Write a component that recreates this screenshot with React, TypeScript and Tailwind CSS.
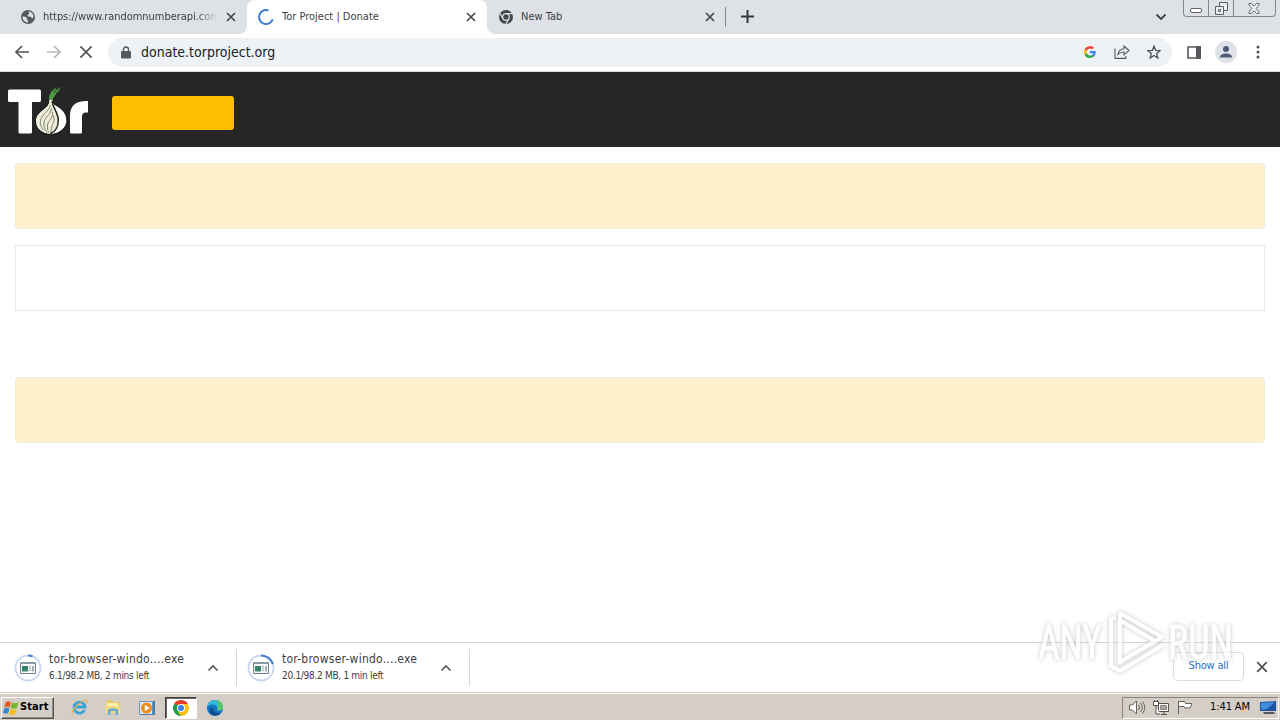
import { FC, ReactNode } from "react";
import clsx from "clsx";

const CloseIcon: FC<{ size?: number; color?: string; weight?: number }> = ({
  size = 10,
  color = "#45484c",
  weight = 1.7,
}) => (
  <svg width={size} height={size} viewBox="0 0 10 10" className="shrink-0">
    <path d="M1 1l8 8M9 1L1 9" stroke={color} strokeWidth={weight} fill="none" />
  </svg>
);

const GlobeIcon = () => (
  <svg width="14" height="14" viewBox="0 0 14 14" className="shrink-0">
    <circle cx="7" cy="7" r="7" fill="#55585d" />
    <path
      d="M1.4 6.6l3 .2 1.5 1.3-.3 1.4 1.3.6.1 2.3C4 12.600 1.300 10 1.400 6.600zM7.500 1.600C10.500 1.600 12.500 4 12.500 7l-1.300 1.600-1.400-1.800-2.800-.3-.6-1.400 1.700-1 .1-1.300-.7-.4z"
      fill="#dee1e6"
    />
  </svg>
);

const SpinnerIcon = () => (
  <svg width="16" height="16" viewBox="0 0 16 16" className="shrink-0">
    <path d="M10.500 1.450A7 7 0 1 0 14.700 10.300" stroke="#3f7fd0" strokeWidth="2" fill="none" />
  </svg>
);

const ChromeMonoIcon = () => (
  <svg width="14" height="14" viewBox="0 0 14 14" className="shrink-0">
    <circle cx="7" cy="7" r="7" fill="#43474c" />
    <circle cx="7" cy="7" r="3.300" fill="none" stroke="#dee1e6" strokeWidth="1.200" />
    <path d="M7 3.700h6.300M4.100 8.700L1 3.500M9.900 8.700L6.800 14" stroke="#dee1e6" strokeWidth="1.200" />
  </svg>
);

const ChromeIcon = () => (
  <svg width="16" height="16" viewBox="0 0 16 16">
    <path d="M8 8L1.070 4A8 8 0 0 1 14.930 4z" fill="#e33b2e" />
    <path d="M8 8L14.930 4A8 8 0 0 1 8 16z" fill="#fbc116" />
    <path d="M8 8L8 16A8 8 0 0 1 1.070 4z" fill="#229a4b" />
    <path d="M8 4h6.930l-3 5.500z" fill="#fbc116" />
    <path d="M11.460 10L8 16l-3-4z" fill="#fbc116" />
    <path d="M4.540 10L1.070 4l4 1z" fill="#229a4b" />
    <circle cx="8" cy="8" r="4" fill="#fff" />
    <circle cx="8" cy="8" r="3" fill="#3e7de9" />
  </svg>
);

const TorLogo = () => (
  <svg width="81" height="50" viewBox="0 0 81 50" className="shrink-0">
    <path
      d="M1.500 3.500H31.500a1.500 1.500 0 0 1 1.500 1.500V14.500a1.500 1.500 0 0 1-1.500 1.500H24V46a1.500 1.500 0 0 1-1.500 1.500H12a1.500 1.500 0 0 1-1.500-1.500V16H1.500A1.500 1.500 0 0 1 0 14.500V5A1.500 1.500 0 0 1 1.500 3.500z"
      fill="#fff"
    />
    <path
      d="M62 46V30C62 19.500 68 14.500 80 15V26.500c-5-.3-6 1-6 5V46a1.500 1.500 0 0 1-1.500 1.500h-9A1.500 1.500 0 0 1 62 46z"
      fill="#fff"
    />
    <path
      d="M41 13c0 6-2.500 7.500-6.500 10.500C29 28 27 31 27.500 36c.5 7.500 7 12.500 15.500 12.500S59 42 59 34.500C59 27 54 22 47 18.500c-1.500-1-2-3-2-5.500z"
      fill="#fff"
      stroke="#1a1a1a"
      strokeWidth="1.200"
    />
    <path
      d="M41.500 13.500c0 6-2.500 8-6.500 11-5 4-6.700 7-6.200 11.500.6 6.500 6 11 13 11.500 4-1 8-5 8.200-12.500.2-6-3.500-10-5-13.500-.8-2-.9-5-.8-8z"
      fill="#eeeed8"
    />
    <path
      d="M44.300 15c-.2 6 5.700 11 6 19 .2 7-3.500 12-8 13.800"
      stroke="#1f2219"
      strokeWidth="1.500"
      fill="none"
    />
    <path
      d="M42.500 19c-1 5-5 7-8 11-4 6-2 11 1.500 14.500M43.500 22c0 6-6 8-7.500 14-.6 4 .5 7.500 3 10.500M44.300 26c1.500 6-4 8-4.800 13-.3 3 0 5 1.200 7.500M45 29c3 6-1 9-1.300 12-.2 2-.5 4-1.500 5.500"
      stroke="#767b64"
      strokeWidth=".9"
      fill="none"
    />
    <path
      d="M41 13c-.5-5 3-9 8-12-3 4-3 5-3 6 2-3 4-5 7.500-6-4 3-5 7-7.500 10-1 1-1.500 2-1.500 3z"
      fill="#3d8e3d"
    />
    <path d="M42 13c1-4 3-7 6-10M44 13c2-5 4-7 8-9" stroke="#79bb57" strokeWidth=".7" fill="none" />
  </svg>
);

const Tab: FC<{ icon: ReactNode; title: string; active?: boolean; width: string; text?: string }> = ({
  icon,
  title,
  active,
  width,
  text,
}) => (
  <div
    className={clsx(
      "relative flex h-[34px] items-center pr-[11px] text-[11px] text-[#3c4043]",
      active ? "rounded-t-lg bg-white pl-[11px]" : "pl-3",
      width,
    )}
  >
    {active && (
      <>
        <svg className="absolute bottom-0 -left-2" width="8" height="8">
          <path d="M8 0v8H0a8 8 0 0 0 8-8z" fill="#fff" />
        </svg>
        <svg className="absolute -right-2 bottom-0" width="8" height="8">
          <path d="M0 0v8h8a8 8 0 0 1-8-8z" fill="#fff" />
        </svg>
      </>
    )}
    {icon}
    <span className={clsx("ml-2 overflow-hidden pt-px whitespace-nowrap", text)}>{title}</span>
    <span className="ml-auto flex">
      <CloseIcon />
    </span>
  </div>
);

const TabStrip = () => (
  <div className="flex h-[34px] bg-[#dee1e6]">
    <Tab
      width="w-[238px] ml-[9px]"
      icon={<GlobeIcon />}
      title="https://www.randomnumberapi.com"
      text="w-[175px] tracking-[-0.05px] [mask-image:linear-gradient(to_right,black_88%,transparent)]"
    />
    <Tab width="w-[240px]" icon={<SpinnerIcon />} title="Tor Project | Donate" active />
    <Tab width="w-[239px]" icon={<ChromeMonoIcon />} title="New Tab" />
    <div className="mt-[7px] -ml-px h-5 w-px bg-[#85888d]" />
    <svg width="13" height="13" viewBox="0 0 13 13" className="mt-[10px] ml-[15px]">
      <path d="M6.500 0v13M0 6.500h13" stroke="#33363a" strokeWidth="2" />
    </svg>
    <svg width="12" height="8" viewBox="0 0 12 8" className="mt-[13px] ml-auto">
      <path d="M1.500 1.500L6 6l4.500-4.500" stroke="#3c4043" strokeWidth="1.800" fill="none" />
    </svg>
    <div className="mr-1 ml-4 flex h-[17px] w-[93px] rounded-b border border-t-0 border-[#84878d]">
      <div className="flex w-[25px] justify-center border-r border-[#84878d] pt-2">
        <div className="h-[5px] w-3 rounded-xs border border-[#606368] bg-white" />
      </div>
      <div className="flex w-[25px] justify-center border-r border-[#84878d] pt-[2px]">
        <svg width="13" height="13" viewBox="0 0 13 13" fill="#eceef1" stroke="#5b5e63">
          <path d="M4.500.5h8v8h-8z" />
          <path d="M.5 4.500h8v8h-8zM3.500 7.500h2v2h-2z" />
        </svg>
      </div>
      <svg width="12" height="11" viewBox="0 0 12 11" className="mt-[3px] ml-[14px]">
        <path
          d="M1 .5h2.500L6 3.300 8.500.5H11v1.500L8 5.500l3 3.500v1.500H8.500L6 7.700 3.500 10.500H1V9l3-3.500L1 2z"
          fill="#f5f6f7"
          stroke="#63666b"
        />
      </svg>
    </div>
  </div>
);

const Toolbar = () => (
  <div className="flex h-[38px] items-center border-b border-[#d9dbde] bg-white pb-px">
    <svg width="16" height="14" viewBox="0 0 16 14" className="ml-[14px]">
      <path d="M15 7H2M8 1L2 7l6 6" stroke="#505358" strokeWidth="1.700" fill="none" />
    </svg>
    <svg width="16" height="14" viewBox="0 0 16 14" className="ml-4">
      <path d="M1 7h13M8 1l6 6-6 6" stroke="#b5b7ba" strokeWidth="1.700" fill="none" />
    </svg>
    <div className="ml-[17px]">
      <CloseIcon size={14} color="#505358" weight={1.2} />
    </div>
    <div className="ml-[15px] flex h-[29px] w-[1064px] items-center rounded-full bg-[#eff2f5] pr-[11px] pl-[13px]">
      <svg width="10" height="13" viewBox="0 0 10 13">
        <path d="M2.500 6V3.500a2.500 2.500 0 0 1 5 0V6" stroke="#55585d" strokeWidth="1.400" fill="none" />
        <rect y="5" width="10" height="7.500" rx="1" fill="#55585d" />
      </svg>
      <span className="ml-[10px] pt-px text-[14px] text-[#202124]">donate.torproject.org</span>
      <svg width="12" height="12" viewBox="0 0 24 24" className="ml-auto">
        <path d="M23.500 12.300c0-.8-.1-1.600-.2-2.300H12v4.500h6.500a5.500 5.500 0 0 1-2.400 3.600v3h3.900c2.200-2.100 3.500-5.100 3.500-8.800z" fill="#4285f4" />
        <path d="M12 24c3.200 0 6-1.100 8-2.900l-3.900-3c-1.100.7-2.500 1.100-4.100 1.100-3.100 0-5.800-2.100-6.700-5H1.300v3.100A12 12 0 0 0 12 24z" fill="#34a853" />
        <path d="M5.300 14.200a7 7 0 0 1 0-4.500V6.600h-4a12 12 0 0 0 0 10.800z" fill="#fbbc05" />
        <path d="M12 4.800c1.800 0 3.300.6 4.600 1.800L20 3.200A12 12 0 0 0 1.300 6.600l4 3.100c.9-2.900 3.600-4.900 6.700-4.900z" fill="#ea4335" />
      </svg>
      <svg width="16" height="14" viewBox="0 0 16 14" className="ml-[18px]" fill="none" stroke="#55585d" strokeWidth="1.100">
        <path d="M1 3.500v9.900h11V11" />
        <path d="M4 9.500c.5-4 2.500-5.700 6-5.800V1l5 4.500-5 4.300V7c-3 0-4.500.7-6 2.500z" />
      </svg>
      <svg width="14" height="14" viewBox="0 0 24 24" className="ml-[17px]" fill="none" stroke="#505358" strokeWidth="2.300">
        <path d="M12 2l2.900 7.200 7.700.5-6 5 2 7.600-6.600-4.200-6.600 4.200 2-7.600-6-5 7.700-.5z" />
      </svg>
    </div>
    <svg width="14" height="13" viewBox="0 0 14 13" className="ml-[15px]">
      <path d="M1 1h12v11H1z" fill="#fff" stroke="#55585d" strokeWidth="1.600" />
      <path d="M9 0h5v13H9z" fill="#55585d" />
    </svg>
    <svg width="22" height="22" viewBox="0 0 22 22" className="ml-[14px]">
      <circle cx="11" cy="11" r="11" fill="#dee1e6" />
      <circle cx="11" cy="8" r="3" fill="#4c5a78" />
      <path d="M5 16.500c0-3 3-4 6-4s6 1 6 4z" fill="#4c5a78" />
    </svg>
    <svg width="4" height="14" viewBox="0 0 4 14" className="ml-[19px]" fill="#505358">
      <circle cx="2" cy="2" r="1.500" />
      <circle cx="2" cy="7" r="1.500" />
      <circle cx="2" cy="12" r="1.500" />
    </svg>
  </div>
);

const DonatePage = () => (
  <div className="h-[570px] bg-white">
    <div className="flex h-[75px] bg-[#262626] pt-[14px] pl-2">
      <TorLogo />
      <div className="mt-[10px] ml-[23px] h-[34px] w-[122px] rounded-[3px] bg-[#ffbf00]" />
    </div>
    <div className="flex flex-col gap-4 px-[15px] pt-4">
      <div className="h-[66px] rounded-[3px] border border-[#f5ecd8] bg-[#fff0ce]" />
      <div className="h-[66px] border border-[#ebebeb]" />
      <div className="mt-[50px] h-[66px] rounded-[3px] border border-[#f5ecd8] bg-[#fff0ce]" />
    </div>
  </div>
);

const Download: FC<{ status: string; arc: string }> = ({ status, arc }) => (
  <div className="flex h-[37px] w-[223px] items-center border-r border-[#d5d7da] pr-[17px]">
    <svg width="28" height="28" viewBox="0 0 28 28" className="shrink-0">
      <circle cx="14" cy="14" r="12.500" fill="none" stroke="#c8d6ee" strokeWidth="1.800" />
      <path d={arc} fill="none" stroke="#3f7fd0" strokeWidth="2" />
      <path d="M6.500 8.500h15v11h-15z" fill="#f8f9f9" stroke="#718086" />
      <path d="M6 8h16v2H6z" fill="#899ba3" />
      <path d="M8 12h6v5.500H8z" fill="#36836c" />
      <path d="M15 12.500h2M15 14.500h2M15 16.500h2" stroke="#9caaaf" />
      <path d="M18 12h2v5.500h-2z" fill="#a2adb5" />
    </svg>
    <div className="ml-[7px] whitespace-nowrap text-[#3c4043]">
      <div className="text-[12px] leading-[17px] tracking-[0.24px]">tor-browser-windo....exe</div>
      <div className="text-[10px] leading-4 tracking-[-0.3px]">{status}</div>
    </div>
    <svg width="12" height="8" viewBox="0 0 12 8" className="ml-auto">
      <path d="M1.500 6.500L6 2l4.500 4.500" stroke="#55585d" strokeWidth="1.600" fill="none" />
    </svg>
  </div>
);

const DownloadShelf = () => (
  <div className="flex h-[50px] items-start border-t border-[#d5d7da] bg-white pt-[6px] pl-[14px]">
    <div className="flex gap-[10px]">
      <Download status="6.1/98.2 MB, 2 mins left" arc="M14 1.500A12.500 12.500 0 0 1 18.600 2.400" />
      <Download status="20.1/98.2 MB, 1 min left" arc="M14 1.500A12.500 12.500 0 0 1 25.900 10.100" />
    </div>
    <div className="mt-[3px] ml-auto flex h-[29px] w-[71px] items-center justify-center rounded border border-[#dadce0] pb-px text-[11px] tracking-[-0.2px] text-[#2c6cc7]">
      Show all
    </div>
    <div className="mt-[12px] mr-3 ml-3">
      <CloseIcon size={12} color="#505358" weight={1.5} />
    </div>
  </div>
);

const Watermark = () => (
  <svg
    width="200"
    height="70"
    viewBox="0 0 200 70"
    className="absolute top-[606px] left-[1036px] opacity-75 drop-shadow-[0_0_2px_#b0b0b0]"
  >
    <g fill="#fff" stroke="#fff" strokeWidth=".8" fontFamily="Roboto, sans-serif" fontSize="49">
      <text x="2" y="53" textLength="64" lengthAdjust="spacingAndGlyphs">
        ANY
      </text>
      <text x="132" y="53" textLength="65" lengthAdjust="spacingAndGlyphs">
        RUN
      </text>
    </g>
    <g fill="none" stroke="#fff" strokeWidth="4" strokeLinejoin="round">
      <path d="M84 7L126 31 84 56z" />
      <path d="M80 11l-5 2v47l9 5 43-26" />
      <path d="M85 15l34 20" />
    </g>
  </svg>
);

const Taskbar = () => (
  <div className="border-t border-[#cfc8c1]">
    <div className="flex h-[27px] items-center border-t border-white bg-[#d5cec6] pt-px">
      <div className="ml-px flex h-[22px] w-[53px] items-center border border-t-white border-r-[#55514d] border-b-[#55514d] border-l-white pl-px text-black shadow-[inset_-1px_-1px_#918b84]">
        <svg width="17" height="16" viewBox="0 0 16 15" className="shrink-0">
          <path d="M2.500 2C4.500.7 6 1 7.500 2L6.300 7C4.700 6 3 6 1.200 7z" fill="#e55b23" />
          <path d="M8.400 2.400c2 1 4 1 6.200-.2l-1.400 5c-2 1.200-4 1.200-6 .1z" fill="#78b62c" />
          <path d="M1 8c2-1 3.500-.9 5 0l-1.300 5C3 12-.3 12.500 0 12.500z" fill="#3687cf" />
          <path d="M6.900 8.400c2 1 4 1 6 0l-1.300 4.800c-2 1.200-4 1-6 .1z" fill="#f5bf20" />
        </svg>
        <span className="text-[11px] font-bold tracking-[0.1px]">Start</span>
      </div>
      <svg width="17" height="17" viewBox="0 0 17 17" className="ml-[17px]">
        <path d="M13.500 11A5.500 5.500 0 1 1 14 8H5" fill="none" stroke="#38a2dc" strokeWidth="2.800" />
        <path d="M1.500 15.500C-1 12 10 1 15.500 1.500c1 .5.500 2 0 3" fill="none" stroke="#e0b34b" strokeWidth="1.200" />
      </svg>
      <svg width="16" height="17" viewBox="0 0 16 17" className="ml-[17px]">
        <path d="M1 3l1-2h5l1 2h6l1 2v8H1z" fill="#e9ca62" />
        <path d="M2 4h11v7H2z" fill="#faf0ae" />
        <path d="M0 7h16l-1 7H1z" fill="#f1d981" />
        <path d="M3 16v-5c0-2 10-2 10 0v5h-2.500v-4h-5v4z" fill="#65aad0" />
      </svg>
      <svg width="16" height="16" viewBox="0 0 16 16" className="ml-[18px]">
        <path d="M.5 1.500h13v13H.5z" fill="#d9e8f3" stroke="#6899bd" />
        <path d="M14 1h2v14H3v-1h11z" fill="#467ba8" />
        <circle cx="7.500" cy="8" r="5.500" fill="#f18a1c" />
        <path d="M5.800 4.700l5 3.300-5 3.300z" fill="#fff" />
      </svg>
      <div className="ml-[10px] flex h-[22px] w-[32px] items-center justify-center border border-t-[#3f3c39] border-r-white border-b-white border-l-[#3f3c39] bg-white shadow-[inset_1px_1px_#6b6762]">
        <ChromeIcon />
      </div>
      <svg width="16" height="16" viewBox="0 0 16 16" className="ml-[10px]">
        <circle cx="8" cy="8" r="8" fill="#1474c4" />
        <path d="M.3 7C1 2 5 0 8 0c5 0 8 4 8 7 0 2.500-2 4-5 3.500-1 0-1-1-.5-2C11 6 8 4.500 5 4.500 3 4.500 1 5.500.3 7z" fill="#35b9d8" />
        <path d="M9 0c4 0 7 3.500 7 7 0 2-1.500 3.500-4 3.600-2 0-2-.8-1.500-2C12 5 11 2 9 0z" fill="#55c66b" />
        <path d="M6 7c-1 4 3 7 8 5.500-3 4-9 4-11 0C2 10 3 7.500 6 7z" fill="#134d91" />
      </svg>
      <div className="mr-px ml-auto flex h-[22px] w-[157px] items-center border border-t-[#8a847d] border-r-white border-b-white border-l-[#8a847d] pl-[6px]">
        <svg width="17" height="15" viewBox="0 0 17 15" fill="none" stroke="#66625e">
          <path d="M.5 5h3l4-4v13l-4-4h-3z" fill="#fff" />
          <path d="M9.500 5q2 2.500 0 5M11.500 3q3.500 4.500 0 9M13.500 1.500q4.500 6 0 12" />
        </svg>
        <svg width="16" height="15" viewBox="0 0 16 15" className="ml-[7px]" fill="#fff" stroke="#55514e">
          <path d="M5.500 3.500h10v8h-10zM8 14.500h6M11 12v2" />
          <path d="M7.500 5.500h6v4h-6z" fill="#aaa5a0" stroke="#8a8580" />
          <path d="M.5 1.500h5v4h-5zM1.500 0v2M4.500 0v2M3 6v8h4" />
        </svg>
        <svg width="16" height="15" viewBox="0 0 16 15" className="ml-2" fill="#fff" stroke="#66625e">
          <path d="M1.500 14V1M1.500 1.500h6l1 2h6.500l-2 4.500H8l-1-1.500H1.500" />
        </svg>
        <span className="ml-[17px] text-[11px] tracking-[-0.1px] whitespace-nowrap text-black">1:41 AM</span>
        <svg width="16" height="14" viewBox="0 0 16 14" className="mr-[2px] ml-auto">
          <path d="M0 1l16-1v10H0z" fill="#1a53a3" />
          <path d="M1 2l14-1-8 7-6 1z" fill="#438ddd" />
          <path d="M3 11h11l1 2H4z" fill="#555b64" />
        </svg>
      </div>
    </div>
  </div>
);

export default function App() {
  return (
    <div className="relative flex h-[720px] w-[1280px] flex-col overflow-hidden bg-white font-['DejaVu_Sans_Condensed','DejaVu_Sans',sans-serif] [font-stretch:condensed]">
      <TabStrip />
      <Toolbar />
      <DonatePage />
      <DownloadShelf />
      <Taskbar />
      <Watermark />
    </div>
  );
}
